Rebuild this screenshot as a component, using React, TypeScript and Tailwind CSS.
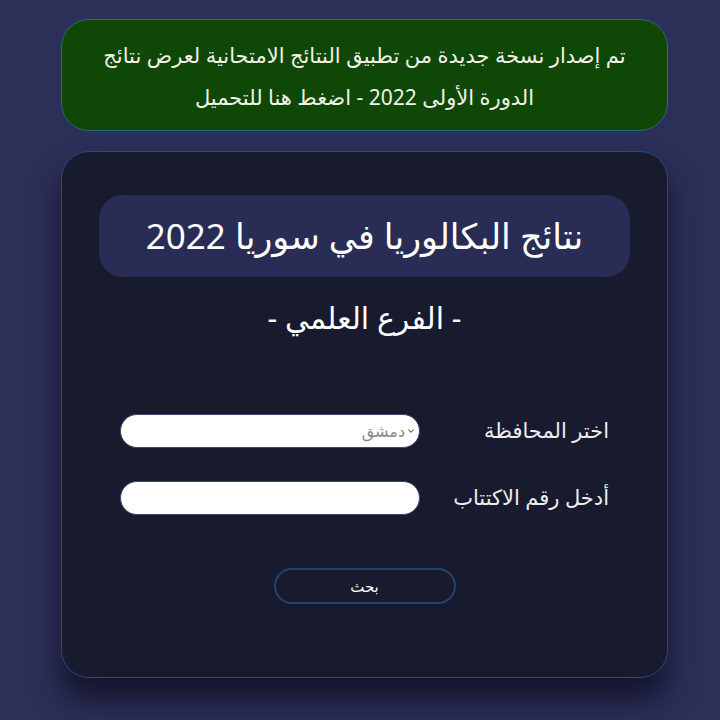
import { ChevronDown } from "lucide-react"

export default function App() {
  return (
    <div
      dir="rtl"
      className="min-h-[720px] w-full bg-[#2c2f58] pt-[19px] pb-[43px]"
      style={{ fontFamily: '"Noto Sans", "DejaVu Sans", sans-serif' }}
    >
      <div className="mr-[52px] flex h-[112px] w-[607px] flex-col items-center justify-center rounded-[28px] border border-[#2a6a7a] bg-[#0f4706] px-4 pt-[2px] text-center text-[21px] leading-[42px] text-[#f2f2e6]">
        <div>تم إصدار نسخة جديدة من تطبيق النتائج الامتحانية لعرض نتائج</div>
        <div>الدورة الأولى 2022 - اضغط هنا للتحميل</div>
      </div>

      <div className="mt-[20px] mr-[52px] h-[527px] w-[607px] rounded-[28px] border border-[#1e4f80] bg-[#181a2d] px-[37px] pt-[43px] shadow-[0_22px_30px_rgba(10,10,25,0.7)]">
        <div className="flex h-[82px] items-center justify-center rounded-[24px] bg-[#292c54] text-[35px] text-white">
          نتائج البكالوريا في سوريا 2022
        </div>
        <div className="mt-[18px] text-center text-[30px] text-white">- الفرع العلمي -</div>

        <div className="mt-[74px] flex flex-col gap-[33px] px-[21px]">
          <div className="flex items-center">
            <label className="w-[189px] text-[21px] text-[#eeeeee]">اختر المحافظة</label>
            <div className="flex h-[34px] flex-1 items-center rounded-full border border-[#3a4a70] bg-white pr-[3px]">
              <ChevronDown className="h-[10px] w-[10px] text-[#555]" strokeWidth={2.5} />
              <span className="mr-[1px] text-[16px] text-[#8a8a8a]">دمشق</span>
            </div>
          </div>
          <div className="flex items-center">
            <label className="w-[189px] text-[21px] text-[#eeeeee]">أدخل رقم الاكتتاب</label>
            <input className="h-[34px] flex-1 rounded-full border border-[#3a4a70] bg-white px-4 outline-none" />
          </div>
        </div>

        <div className="mt-[53px] flex justify-center">
          <button className="h-[36px] w-[182px] rounded-full border-2 border-[#1f4470] bg-transparent text-[15px] text-white">
            بحث
          </button>
        </div>
      </div>
    </div>
  )
}
